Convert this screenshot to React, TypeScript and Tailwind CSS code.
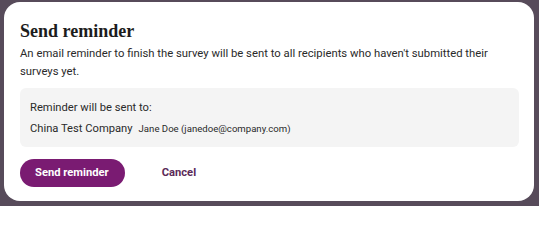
export default function App() {
  return (
    <div className="w-[539px] h-[206px] bg-[#574b5a] pl-[4px] pt-[2px] overflow-hidden">
      <div className="w-[530px] h-[199px] bg-white rounded-[16px] px-[16px] pt-[18px] font-['Roboto',sans-serif]">
        <h2 className="font-['Liberation_Serif',serif] font-bold text-[18px] leading-[22px] text-[#1c1c1c]">
          Send reminder
        </h2>
        <p className="mt-[3px] text-[11.3px] leading-[18px] text-[#2a2a2a]">
          An email reminder to finish the survey will be sent to all recipients who haven't submitted their
          surveys yet.
        </p>
        <div className="mt-[7px] w-[499px] h-[59px] bg-[#f4f4f4] rounded-[6px] px-[10px] pt-[11px]">
          <div className="text-[11.2px] leading-[18px] text-[#2a2a2a]">Reminder will be sent to:</div>
          <div className="mt-[3px] flex items-baseline gap-[6px] text-[#2a2a2a]">
            <span className="text-[11.2px] leading-[18px]">China Test Company</span>
            <span className="text-[9.6px]">Jane Doe (janedoe@company.com)</span>
          </div>
        </div>
        <div className="mt-[12px] flex items-center gap-[37px] h-[28px]">
          <button className="h-[28px] pl-[15px] pr-[16px] rounded-full bg-[#7a1b72] text-white text-[11.2px] leading-[28px] font-bold">
            Send reminder
          </button>
          <button className="text-[11.2px] leading-[16px] font-bold text-[#5b2a58]">Cancel</button>
        </div>
      </div>
    </div>
  );
}
